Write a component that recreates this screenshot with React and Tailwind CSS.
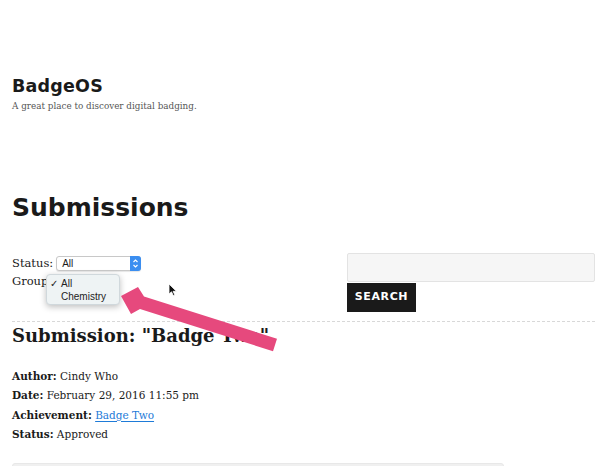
import React from 'react';

const serif = { fontFamily: '"DejaVu Serif", "Liberation Serif", serif' };

const App = () => {
  return (
    <div className="relative w-[616px] h-[466px] overflow-hidden bg-white px-3">
      {/* Site header */}
      <div className="pt-[74px]">
        <div className="text-[17.5px] font-bold leading-[24px] text-[#1a1a1a] font-['DejaVu_Sans',sans-serif] tracking-[0.2px]">
          BadgeOS
        </div>
        <div className="text-[8.8px] leading-[14px] text-[#555] mt-[1px]" style={serif}>
          A great place to discover digital badging.
        </div>
      </div>

      {/* Page title */}
      <h1 className="mt-[77px] text-[25px] font-bold leading-[36px] text-[#1a1a1a] font-['DejaVu_Sans',sans-serif]">
        Submissions
      </h1>

      {/* Filters + search */}
      <div className="mt-[27px] flex w-[583px] justify-between">
        <div className="text-[11.5px] text-[#1a1a1a]" style={serif}>
          <div className="flex items-center h-[19px] pt-[2px]">
            <span>Status:</span>
            <div className="relative ml-[3px] flex h-[15px] w-[85px] items-center rounded-[3px] border border-[#c8c8c8] bg-white shadow-[0_1px_1px_rgba(0,0,0,0.1)]">
              <span className="pl-[5px] text-[10px] font-['Liberation_Sans',sans-serif]">All</span>
              <div className="ml-auto flex h-[15px] w-[11px] flex-col items-center justify-center rounded-r-[3px] bg-[#3b8ef0] -mr-px">
                <svg width="7" height="11" viewBox="0 0 7 11">
                  <path d="M1.5 4 L3.5 2 L5.5 4 M1.5 7 L3.5 9 L5.5 7" fill="none" stroke="white" strokeWidth="1.1" />
                </svg>
              </div>
            </div>
          </div>
          <div className="flex items-center h-[19px]">
            <span>Group</span>
          </div>
        </div>

        <div className="w-[248px]">
          <div className="h-[29px] w-full rounded-[2px] border border-[#e3e3e3] bg-[#f6f6f6]"></div>
          <button className="h-[29px] w-[69px] bg-[#1a1a1a] text-[11px] font-bold tracking-[0.6px] text-white font-['DejaVu_Sans',sans-serif]">
            SEARCH
          </button>
        </div>
      </div>

      {/* Submission */}
      <div className="mt-[9px] w-[583px] border-t border-dashed border-[#d8d8d8]">
        <h2 className="text-[18px] font-bold leading-[26px] text-[#1a1a1a] mt-[1px]" style={serif}>
          Submission: "Badge Two"
        </h2>
        <div className="mt-[18px] text-[10.5px] leading-[19.5px] text-[#1a1a1a]" style={serif}>
          <p><strong>Author:</strong> Cindy Who</p>
          <p><strong>Date:</strong> February 29, 2016 11:55 pm</p>
          <p>
            <strong>Achievement:</strong>{' '}
            <a href="#" className="text-[#1e7bd8] underline underline-offset-2 decoration-[#1e7bd8]">Badge Two</a>
          </p>
          <p><strong>Status:</strong> Approved</p>
        </div>
        <div className="mt-[18px] h-[6px] w-[492px] rounded-t-[3px] bg-[#f0f0f0] border border-[#e8e8e8]"></div>
      </div>

      {/* Open select menu */}
      <div className="absolute left-[46px] top-[274px] w-[74px] h-[31px] rounded-[4px] bg-[#eef3f4] shadow-[0_2px_6px_rgba(0,0,0,0.25)] border border-[#d0d8dc] text-[10px] leading-[13px] text-[#222] font-['Liberation_Sans',sans-serif]">
        <div className="flex pt-[2px]">
          <span className="w-[14px] pl-[3px]">✓</span>
          <span>All</span>
        </div>
        <div className="pl-[14px]">Chemistry</div>
      </div>

      {/* Mouse pointer */}
      <svg className="absolute left-[168px] top-[283px]" width="10" height="14" viewBox="0 0 10 14">
        <path d="M1 1 L1 11 L3.5 8.8 L5.3 12.6 L6.8 11.9 L5.1 8.3 L8.4 8.3 Z" fill="#111" stroke="white" strokeWidth="0.8" />
      </svg>

      {/* Annotation arrow */}
      <svg className="absolute left-0 top-0 pointer-events-none" width="616" height="466" viewBox="0 0 616 466">
        <polygon
          points="121,296 138,287 144,296.5 277,338.8 273,351.2 140,308.9 131,314"
          fill="#e6497d"
        />
      </svg>
    </div>
  );
};

export default App;
